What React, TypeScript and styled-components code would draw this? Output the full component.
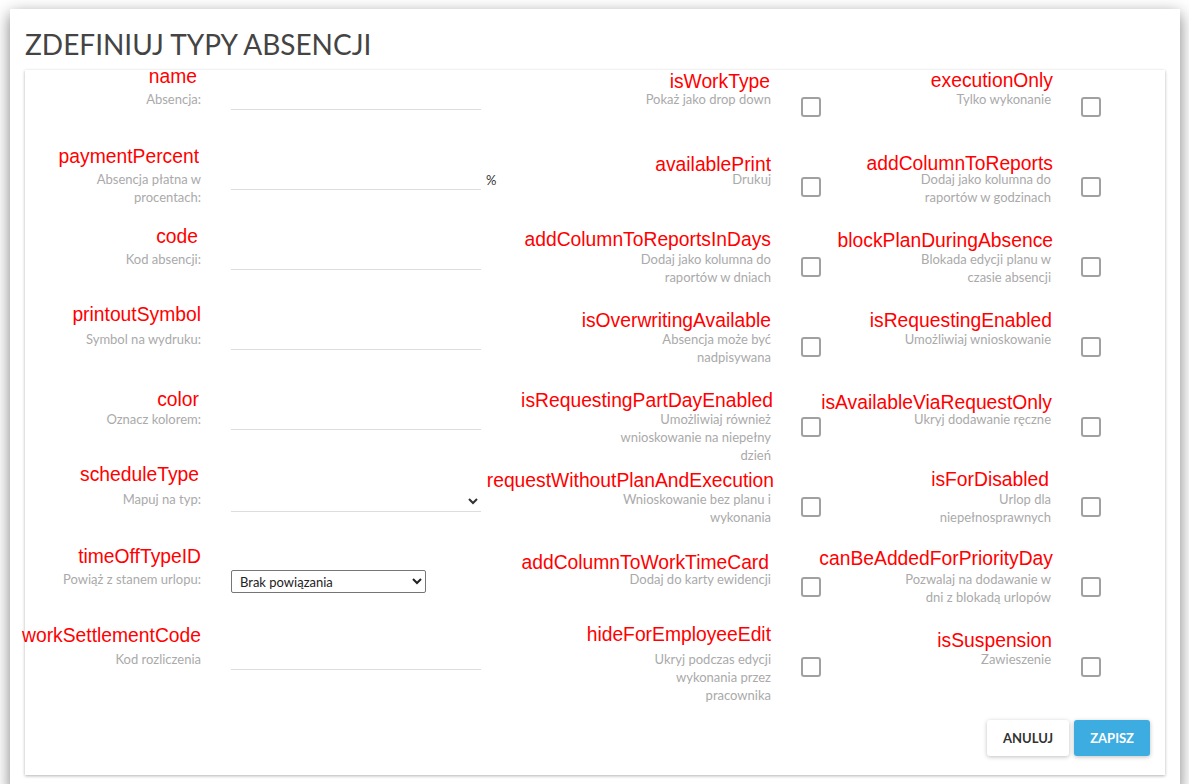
import React from 'react';
import styled, { createGlobalStyle } from 'styled-components';

// definicje pól formularza (nazwa pola, opis, przesunięcia czerwonej etykiety)
type Kind = 'input' | 'percent' | 'lineSelect' | 'boxSelect' | 'check';

interface FieldDef {
  name: string;
  desc: string;
  base: number; // linia bazowa czerwonej nazwy od góry wiersza
  dx: number; // przesunięcie prawej krawędzi nazwy
  kind: Kind;
}

const leftFields: FieldDef[] = [
  { name: 'name', desc: 'Absencja:', base: 13, dx: -4, kind: 'input' },
  { name: 'paymentPercent', desc: 'Absencja płatna w procentach:', base: 13, dx: -2, kind: 'percent' },
  { name: 'code', desc: 'Kod absencji:', base: 13, dx: -3, kind: 'input' },
  { name: 'printoutSymbol', desc: 'Symbol na wydruku:', base: 11, dx: 0, kind: 'input' },
  { name: 'color', desc: 'Oznacz kolorem:', base: 16, dx: -2, kind: 'input' },
  { name: 'scheduleType', desc: 'Mapuj na typ:', base: 11, dx: -2, kind: 'lineSelect' },
  { name: 'timeOffTypeID', desc: 'Powiąż z stanem urlopu:', base: 13, dx: 0, kind: 'boxSelect' },
  { name: 'workSettlementCode', desc: 'Kod rozliczenia', base: 12, dx: 0, kind: 'input' },
];

const middleFields: FieldDef[] = [
  { name: 'isWorkType', desc: 'Pokaż jako drop down', base: 18, dx: -1, kind: 'check' },
  { name: 'availablePrint', desc: 'Drukuj', base: 21.5, dx: 0, kind: 'check' },
  { name: 'addColumnToReportsInDays', desc: 'Dodaj jako kolumna do raportów w dniach', base: 16.7, dx: 0, kind: 'check' },
  { name: 'isOverwritingAvailable', desc: 'Absencja może być nadpisywana', base: 17, dx: 0, kind: 'check' },
  { name: 'isRequestingPartDayEnabled', desc: 'Umożliwiaj również wnioskowanie na niepełny dzień', base: 17.7, dx: 2, kind: 'check' },
  { name: 'requestWithoutPlanAndExecution', desc: 'Wnioskowanie bez planu i wykonania', base: 17, dx: 3, kind: 'check' },
  { name: 'addColumnToWorkTimeCard', desc: 'Dodaj do karty ewidencji', base: 19, dx: -2, kind: 'check' },
  { name: 'hideForEmployeeEdit', desc: 'Ukryj podczas edycji wykonania przez pracownika', base: 11.7, dx: 0, kind: 'check' },
];

const rightFields: FieldDef[] = [
  { name: 'executionOnly', desc: 'Tylko wykonanie', base: 17, dx: 2, kind: 'check' },
  { name: 'addColumnToReports', desc: 'Dodaj jako kolumna do raportów w godzinach', base: 20.7, dx: 2, kind: 'check' },
  { name: 'blockPlanDuringAbsence', desc: 'Blokada edycji planu w czasie absencji', base: 17, dx: 2, kind: 'check' },
  { name: 'isRequestingEnabled', desc: 'Umożliwiaj wnioskowanie', base: 17, dx: 1, kind: 'check' },
  { name: 'isAvailableViaRequestOnly', desc: 'Ukryj dodawanie ręczne', base: 19, dx: 1, kind: 'check' },
  { name: 'isForDisabled', desc: 'Urlop dla niepełnosprawnych', base: 16.7, dx: -2, kind: 'check' },
  { name: 'canBeAddedForPriorityDay', desc: 'Pozwalaj na dodawanie w dni z blokadą urlopów', base: 15, dx: 2, kind: 'check' },
  { name: 'isSuspension', desc: 'Zawieszenie', base: 17.7, dx: 1, kind: 'check' },
];

const GlobalStyle = createGlobalStyle`
  html, body {
    margin: 0;
    background: #fff;
    font-family: Lato, "Open Sans", sans-serif;
  }
`;

const Dialog = styled.div`
  box-sizing: border-box;
  width: 1170px;
  margin: 9px 0 0 10px;
  padding: 20px 15px 15px;
  background: #fff;
  box-shadow: 0 5px 15px rgba(0, 0, 0, 0.5);
`;

const Title = styled.h2`
  margin: 0 0 10px;
  font: 400 28px/31px Lato, sans-serif;
  color: #444;
  text-transform: uppercase;
`;

const Card = styled.div`
  background: #fff;
  box-shadow: 0 1px 3px rgba(0, 0, 0, 0.3);
`;

const FieldsGrid = styled.div`
  display: grid;
  grid-template-columns: 496px 300px 280px;
`;

const Column = styled.div`
  display: flex;
  flex-direction: column;
`;

const Field = styled.div<{ $labelWidth: number }>`
  display: grid;
  grid-template-columns: ${(p) => p.$labelWidth}px auto;
  grid-template-rows: 20px auto;
  column-gap: 30px;
  align-content: start;
  height: 80px;
`;

const FieldName = styled.div<{ $base: number; $dx: number }>`
  grid-column: 1;
  grid-row: 1;
  display: flex;
  justify-content: flex-end;
  height: 20px;
  margin-top: ${(p) => p.$base - 16.5}px;
  margin-right: ${(p) => -p.$dx}px;
  white-space: nowrap;
  font: 400 19.3px/20px "Liberation Sans", Arial, sans-serif;
  color: #f00;
`;

const Desc = styled.div`
  grid-column: 1;
  grid-row: 2;
  justify-self: end;
  width: 156px;
  text-align: right;
  font-size: 13px;
  line-height: 18px;
  color: #aaa;
`;

const ControlCell = styled.div`
  grid-column: 2;
  grid-row: 2;
  display: flex;
  align-items: flex-start;
`;

const LineInput = styled.input`
  display: block;
  box-sizing: border-box;
  width: 250px;
  height: 20px;
  padding: 0;
  border: 0;
  border-bottom: 1px solid #ddd;
  background: transparent;
  outline: none;
  font: 13px Lato, sans-serif;
`;

const Suffix = styled.span`
  margin-left: 5px;
  font: 13px/20px Lato, sans-serif;
  color: #333;
`;

const LineSelect = styled.select`
  box-sizing: border-box;
  width: 250px;
  height: 22px;
  padding: 0;
  border: 0;
  border-bottom: 1px solid #ddd;
  border-radius: 0;
  background: transparent;
  font: 13px Lato, sans-serif;
  color: #333;
`;

const BoxSelect = styled.select`
  box-sizing: border-box;
  width: 195px;
  height: 23px;
  padding: 0 0 0 4px;
  border: 1px solid #767676;
  border-radius: 2px;
  background: #fff;
  font: 13px Lato, sans-serif;
  color: #222;
`;

const Check = styled.input.attrs({ type: 'checkbox' })`
  appearance: none;
  box-sizing: border-box;
  width: 20px;
  height: 20px;
  margin: 7px 0 0;
  border: 2px solid #a0a0a0;
  border-radius: 3px;
  background: #fff;
`;

const Footer = styled.div`
  display: flex;
  justify-content: flex-end;
  gap: 5px;
  padding: 10px 15px 19px;
`;

const Button = styled.button<{ $primary?: boolean }>`
  height: 36px;
  padding: 0 16px;
  border: 0;
  border-radius: 3px;
  font: 700 13px Lato, sans-serif;
  text-transform: uppercase;
  background: ${(p) => (p.$primary ? '#3dace0' : '#fff')};
  color: ${(p) => (p.$primary ? '#fff' : '#333')};
  box-shadow: 0 1px 4px rgba(0, 0, 0, 0.25);
`;

const Control: React.FC<{ kind: Kind }> = ({ kind }) => {
  switch (kind) {
    case 'percent':
      return (
        <>
          <LineInput />
          <Suffix>%</Suffix>
        </>
      );
    case 'lineSelect':
      return (
        <LineSelect defaultValue="">
          <option value="" />
        </LineSelect>
      );
    case 'boxSelect':
      return (
        <BoxSelect defaultValue="none">
          <option value="none">Brak powiązania</option>
        </BoxSelect>
      );
    case 'check':
      return <Check />;
    default:
      return <LineInput />;
  }
};

const FieldColumn: React.FC<{ fields: FieldDef[]; labelWidth: number }> = ({ fields, labelWidth }) => (
  <Column>
    {fields.map((f) => (
      <Field key={f.name} $labelWidth={labelWidth}>
        <FieldName $base={f.base} $dx={f.dx}>
          {f.name}
        </FieldName>
        <Desc>{f.desc}</Desc>
        <ControlCell>
          <Control kind={f.kind} />
        </ControlCell>
      </Field>
    ))}
  </Column>
);

export default function App() {
  return (
    <>
      <GlobalStyle />
      <Dialog>
        <Title>Zdefiniuj typy absencji</Title>
        <Card>
          <FieldsGrid>
            <FieldColumn fields={leftFields} labelWidth={176} />
            <FieldColumn fields={middleFields} labelWidth={250} />
            <FieldColumn fields={rightFields} labelWidth={230} />
          </FieldsGrid>
          <Footer>
            <Button>Anuluj</Button>
            <Button $primary>Zapisz</Button>
          </Footer>
        </Card>
      </Dialog>
    </>
  );
}
